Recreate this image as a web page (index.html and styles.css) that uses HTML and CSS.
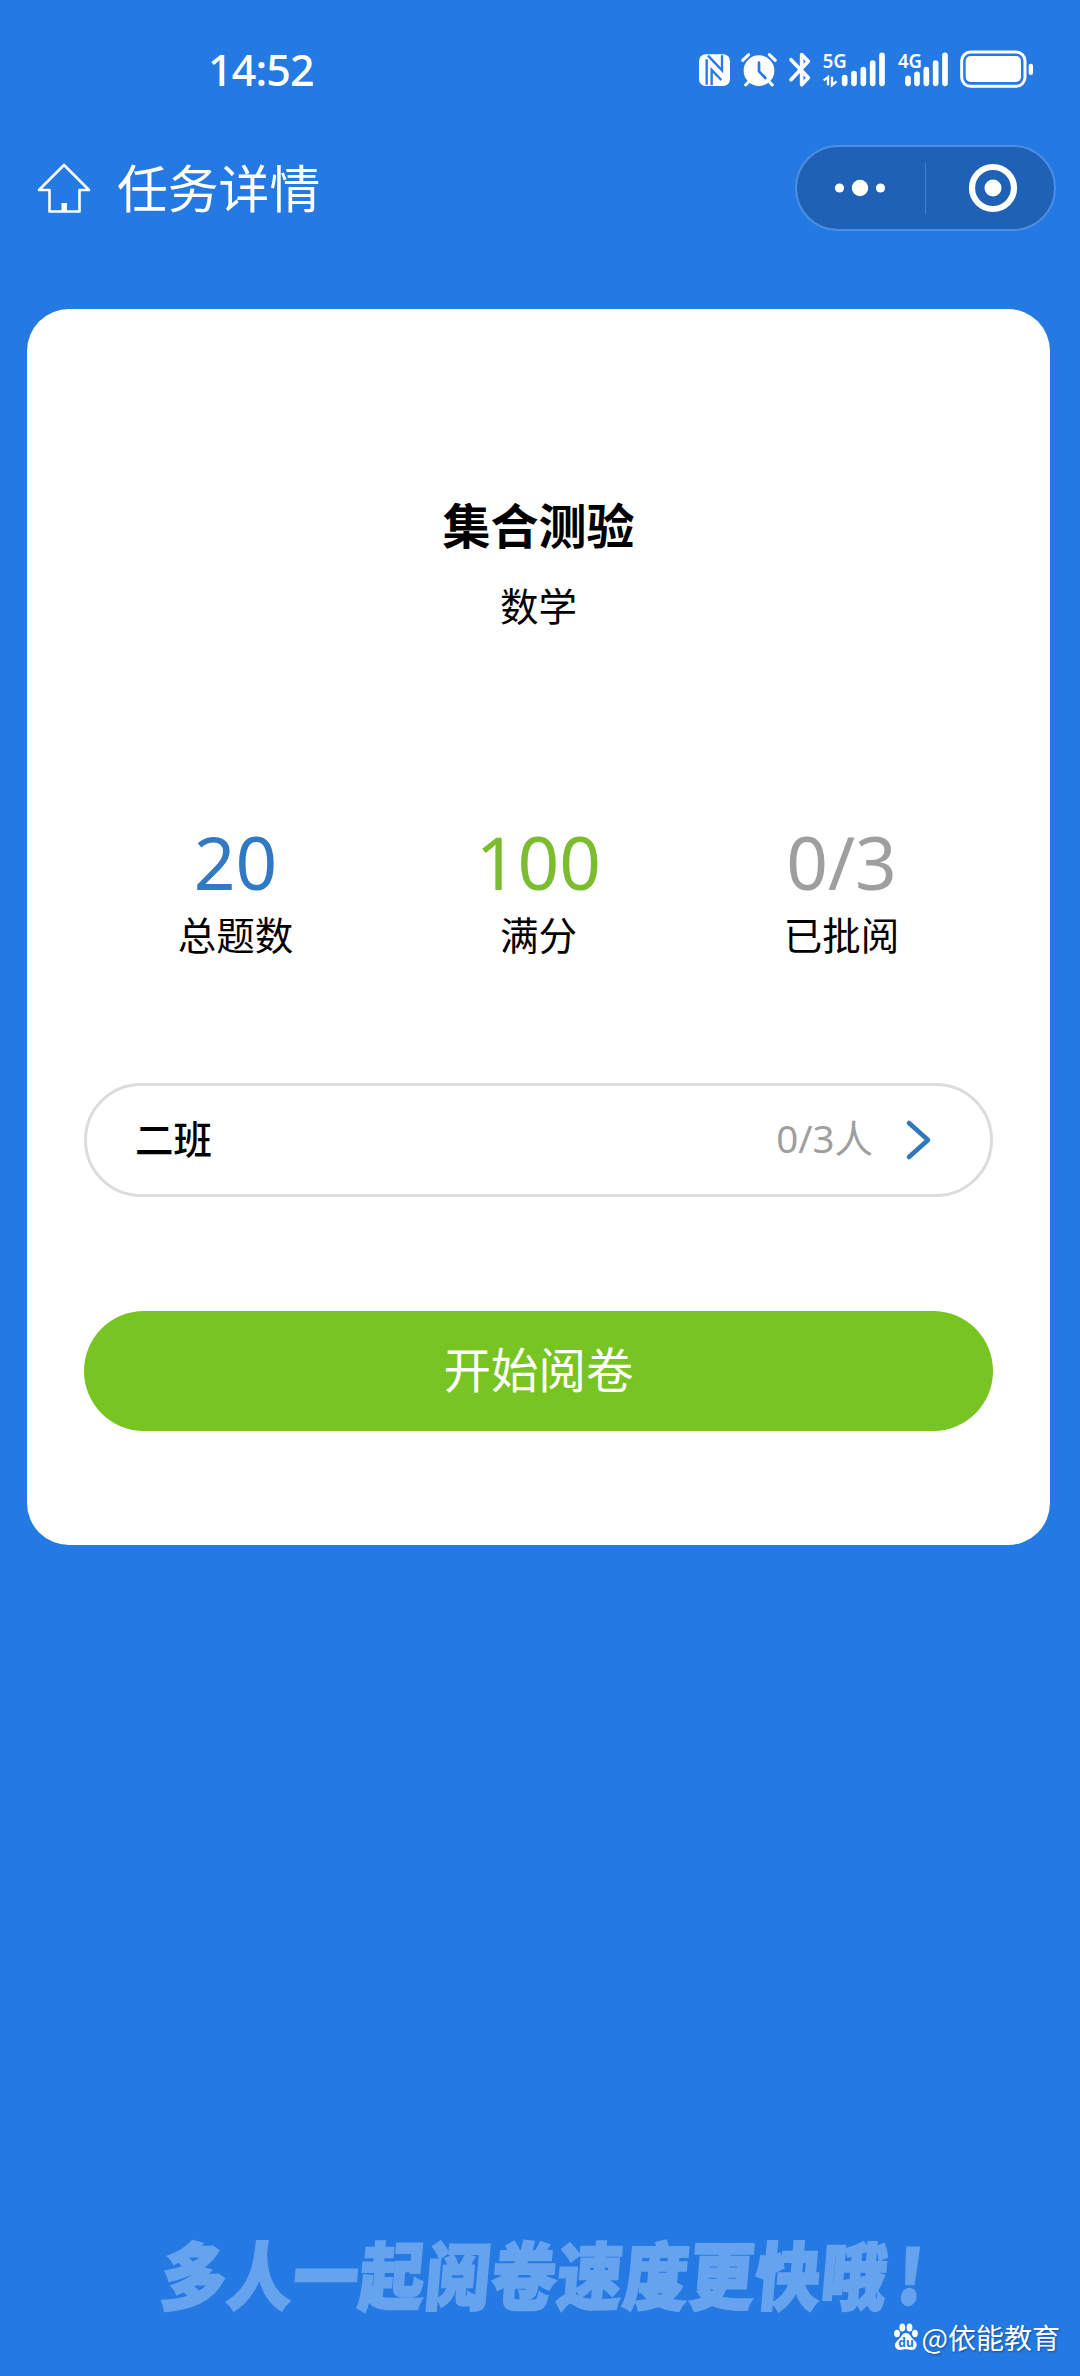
FILE: index.html
```html
<!DOCTYPE html>
<html lang="zh-CN">
<head>
<meta charset="utf-8">
<title>任务详情</title>
<link rel="stylesheet" href="styles.css">
</head>
<body>
<div class="screen">
  <header class="status">
    <span class="time">14:52</span>
    <div class="status-icons">
      <svg width="33" height="40" viewBox="54 55 99 120">
        <rect x="57" y="71" width="93" height="95" rx="20" fill="#fff"/>
        <path d="M80 86V162M84 75L126 119V74M95 164V118L124 148" fill="none" stroke="#2479e2" stroke-width="7"/>
      </svg>
      <svg width="38" height="40" viewBox="183 55 114 120">
        <circle cx="240" cy="120" r="46" fill="#fff"/>
        <path d="M191 89L209 72M289 89L271 72M212 150L200 163M268 150L280 163" stroke="#fff" stroke-width="9" stroke-linecap="round"/>
        <path d="M240 96V122L259 142" fill="none" stroke="#2479e2" stroke-width="8" stroke-linecap="round"/>
      </svg>
      <svg width="25" height="40" viewBox="327 55 75 120">
        <path d="M336 87L388 141L368 162V72L388 92L336 147" fill="none" stroke="#fff" stroke-width="11" stroke-linecap="round" stroke-linejoin="round"/>
      </svg>
      <svg width="65" height="40" viewBox="429 55 195 120">
        <text class="net" x="431" y="112" textLength="72" lengthAdjust="spacingAndGlyphs">5G</text>
        <path d="M434 149L447 139V164M459 138V163L473 152" fill="none" stroke="#fff" stroke-width="7"/>
        <path d="M497 141V158M525 129V158M553 117V158M581 97V158M609 74V158" stroke="#fff" stroke-width="17" stroke-linecap="round"/>
      </svg>
      <svg width="53" height="40" viewBox="651 55 159 120">
        <text class="net" x="654" y="112" textLength="72" lengthAdjust="spacingAndGlyphs">4G</text>
        <path d="M684 143V158M711 131V158M739 117V158M767 97V158M795 74V158" stroke="#fff" stroke-width="17" stroke-linecap="round"/>
      </svg>
      <svg width="76" height="40" viewBox="837 55 228 120">
        <rect x="845" y="64" width="190" height="103" rx="27" fill="none" stroke="#fff" stroke-width="9"/>
        <rect x="857" y="76" width="166" height="78" rx="15" fill="#fff"/>
        <rect x="1046" y="99" width="13" height="34" rx="6" fill="#fff"/>
      </svg>
    </div>
  </header>

  <nav class="nav">
    <svg class="home" width="54" height="54" viewBox="0 0 54 54">
      <path d="M27 4L52 29H42.500V50.500H12.500V29H2Z" fill="none" stroke="#fff" stroke-width="2.600" stroke-linejoin="round"/>
      <path d="M24.500 42H30V50H24.500Z" fill="#fff"/>
    </svg>
    <h1 class="nav-title">任务详情</h1>
    <div class="capsule">
      <svg class="dots" width="54" height="20" viewBox="0 0 54 20">
        <circle cx="6.500" cy="10" r="4.600" fill="#fff"/>
        <circle cx="27" cy="10" r="8.200" fill="#fff"/>
        <circle cx="47.500" cy="10" r="4.600" fill="#fff"/>
      </svg>
      <span class="divider"></span>
      <svg class="ring" width="50" height="50" viewBox="0 0 50 50">
        <circle cx="25" cy="25" r="21" fill="none" stroke="#fff" stroke-width="6.200"/>
        <circle cx="25" cy="25" r="8.500" fill="#fff"/>
      </svg>
    </div>
  </nav>

  <main class="card">
    <h2 class="title">集合测验</h2>
    <p class="subject">数学</p>
    <div class="stats">
      <div class="stat blue"><b>20</b><span>总题数</span></div>
      <div class="stat green"><b>100</b><span>满分</span></div>
      <div class="stat gray"><b>0/3</b><span>已批阅</span></div>
    </div>
    <div class="class-row">
      <span class="class-name">二班</span>
      <span class="progress">0/3人</span>
      <svg class="chevron" width="26" height="42" viewBox="0 0 26 42">
        <path d="M3 4L22 21L3 38" fill="none" stroke="#3278ba" stroke-width="4.600" stroke-linecap="round" stroke-linejoin="round"/>
      </svg>
    </div>
    <button class="start">开始阅卷</button>
  </main>

  <p class="slogan">多人一起阅卷速度更快哦<span class="bang">!</span></p>

  <div class="watermark">
    <svg width="26" height="28" viewBox="0 0 26 28">
      <g fill="#fff">
        <ellipse cx="4" cy="10.500" rx="2.900" ry="3.700"/>
        <ellipse cx="9.300" cy="4.500" rx="2.900" ry="3.900"/>
        <ellipse cx="16.500" cy="4.500" rx="2.900" ry="3.900"/>
        <ellipse cx="22" cy="10.500" rx="2.900" ry="3.700"/>
        <path d="M13 10C17 10 18 15 21.500 17.500C26 21 23 27 19 27C16 27 15 26.300 13 26.300S10 27 7 27C2 27 0 21 4.500 17.500C8 15 9 10 13 10Z"/>
      </g>
      <text class="du" x="13" y="24" text-anchor="middle">du</text>
    </svg>
    <span>@依能教育</span>
  </div>
</div>
</body>
</html>
```
FILE: styles.css
```css
* {
  box-sizing: border-box;
  margin: 0;
  padding: 0;
}

body {
  background: #2479e2;
  font-family: "Noto Sans CJK SC", sans-serif;
  color: #000;
}

svg {
  overflow: visible;
}

.screen {
  position: relative;
  display: flex;
  flex-direction: column;
  width: 1080px;
  height: 2376px;
  overflow: hidden;
  background: #2479e2;
}

.status {
  display: flex;
  align-items: center;
  justify-content: space-between;
  height: 137px;
  padding: 0 45px 0 208px;
}

.time {
  padding-top: 2px;
  font: 500 43px/60px "Noto Sans", sans-serif;
  letter-spacing: -0.9px;
  color: #fff;
}

.status-icons {
  display: flex;
  gap: 9.4px;
}

.net {
  font: 600 60px "Noto Sans", sans-serif;
  fill: #fff;
}

.nav {
  display: flex;
  align-items: center;
  height: 102px;
  padding: 0 24px 0 37px;
}

.nav-title {
  margin-left: 26px;
  padding-bottom: 4px;
  font-size: 50.800px;
  font-weight: 400;
  line-height: 70px;
  color: #fff;
}

.capsule {
  display: flex;
  align-items: center;
  width: 261px;
  height: 86px;
  margin-left: auto;
  border: 2px solid #4b8fe5;
  border-radius: 43px;
  background: #1f62b5;
}

.dots {
  margin-left: 36px;
}

.divider {
  width: 1px;
  height: 51px;
  margin-left: 38px;
  background: #4480cb;
}

.ring {
  margin-left: 42px;
}

.card {
  width: 1023px;
  height: 1236px;
  margin: 70px 0 0 27px;
  padding: 184px 57px 0;
  border-radius: 42px;
  background: #fff;
}

.title {
  font-size: 48px;
  font-weight: 700;
  line-height: 60px;
  text-align: center;
}

.subject {
  margin-top: 26px;
  font-size: 38.500px;
  line-height: 50px;
  text-align: center;
}

.stats {
  display: grid;
  grid-template-columns: repeat(3, 1fr);
  margin-top: 193px;
}

.stat {
  display: flex;
  flex-direction: column;
  gap: 6px;
  text-align: center;
}

.stat b {
  font: 400 73px/80px "Noto Sans", sans-serif;
}

.stat span {
  font-size: 38.500px;
  line-height: 50px;
}

.blue b {
  color: #3279c4;
}

.green b {
  color: #7bbc30;
}

.gray b {
  color: #9f9f9f;
}

.class-row {
  display: flex;
  align-items: center;
  height: 114px;
  margin-top: 125px;
  padding: 0 58px 0 48px;
  border: 3px solid #dcdcdc;
  border-radius: 57px;
}

.class-name {
  padding-bottom: 7px;
  font-size: 38.500px;
  font-weight: 500;
}

.progress {
  margin-left: auto;
  padding-bottom: 8px;
  font-size: 38.500px;
  font-family: "Noto Sans", "Noto Sans CJK SC", sans-serif;
  font-weight: 400;
  color: #9f9f9f;
}

.chevron {
  margin-left: 33px;
}

.start {
  display: block;
  width: 100%;
  height: 120px;
  margin-top: 114px;
  padding-bottom: 7px;
  border: 0;
  border-radius: 60px;
  background: #77c422;
  font: 400 47.500px/60px "Noto Sans CJK SC", sans-serif;
  color: #fff;
}

.slogan {
  margin: 680px 0 0 162px;
  font-size: 65px;
  font-weight: 900;
  line-height: 94px;
  letter-spacing: 1px;
  white-space: nowrap;
  color: #66a3ef;
  -webkit-text-stroke: 2px #66a3ef;
  transform: skewX(-5deg) scaleY(1.13);
  transform-origin: left center;
}

.bang {
  margin-left: 10px;
}

.watermark {
  position: absolute;
  right: 20px;
  bottom: 19px;
  display: flex;
  align-items: center;
  gap: 3px;
  font-size: 28px;
  line-height: 40px;
  color: #fff;
  text-shadow: 1px 1px 2px #174f96;
}

.du {
  font: 700 12px "Noto Sans", sans-serif;
  fill: #2479e2;
  text-shadow: none;
}
```
